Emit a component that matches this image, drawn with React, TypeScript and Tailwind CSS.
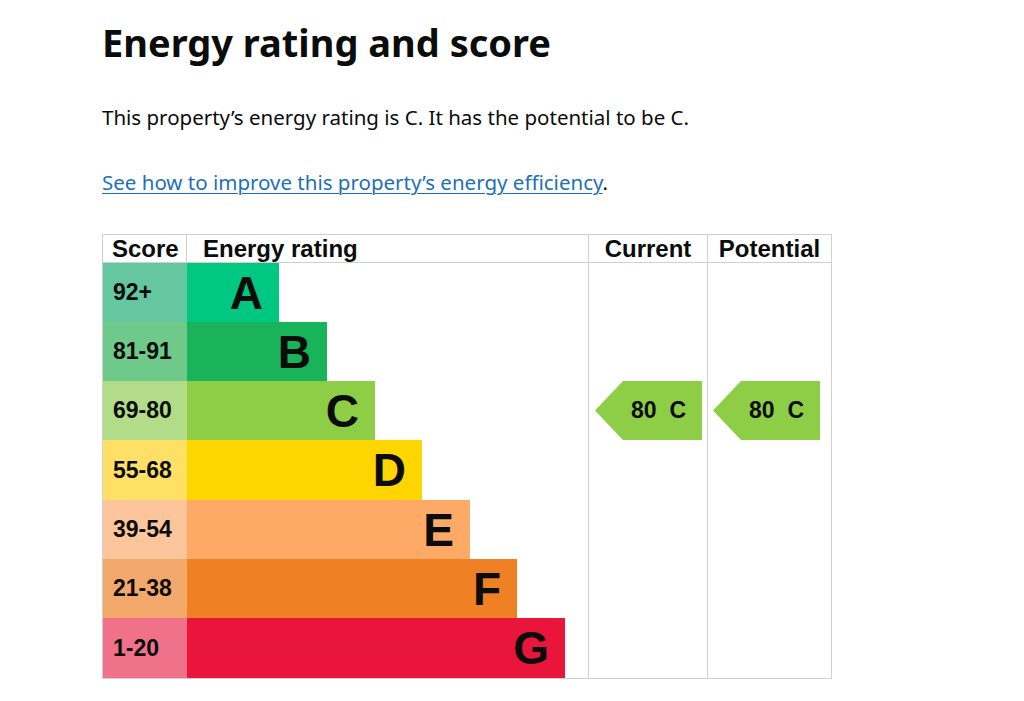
const bands = [
  { score: "92+", letter: "A", width: "w-[92px]", bar: "bg-[#00c781]", tint: "bg-[#64c7a0]", h: "h-[59px]" },
  { score: "81-91", letter: "B", width: "w-[140px]", bar: "bg-[#19b459]", tint: "bg-[#6fc98b]", h: "h-[59px]" },
  { score: "69-80", letter: "C", width: "w-[188px]", bar: "bg-[#8dce46]", tint: "bg-[#b2dc88]", h: "h-[59px]" },
  { score: "55-68", letter: "D", width: "w-[235px]", bar: "bg-[#ffd500]", tint: "bg-[#ffe066]", h: "h-[60px]" },
  { score: "39-54", letter: "E", width: "w-[283px]", bar: "bg-[#fcaa65]", tint: "bg-[#fdc59b]", h: "h-[59px]" },
  { score: "21-38", letter: "F", width: "w-[330px]", bar: "bg-[#ef8023]", tint: "bg-[#f2a76b]", h: "h-[59px]" },
  { score: "1-20", letter: "G", width: "w-[378px]", bar: "bg-[#e9153b]", tint: "bg-[#f0728a]", h: "h-[60px]" },
];

const arial = "font-['Liberation_Sans',Arial,sans-serif]";

function RatingArrow({ score, letter }: { score: string; letter: string }) {
  return (
    <div className="flex h-[59px] w-[107px]">
      <svg width="28" height="59" viewBox="0 0 28 59" className="shrink-0">
        <polygon points="0,29.5 28,0 28,59" fill="#8dce46" />
      </svg>
      <div
        className={`flex flex-1 items-center justify-center gap-[13px] bg-[#8dce46] pr-[8px] text-[23px] font-bold text-[#0b0c0c] ${arial}`}
      >
        <span>{score}</span>
        <span>{letter}</span>
      </div>
    </div>
  );
}

export default function App() {
  return (
    <div className="min-h-[701px] bg-white pl-[102px] pt-[17px] font-['Noto_Sans',sans-serif] text-[#0b0c0c]">
      <h1 className="text-[38px] font-bold leading-[50px]">Energy rating and score</h1>

      <p className="mt-[37px] text-[20.5px] leading-[26px]">
        This property’s energy rating is C. It has the potential to be C.
      </p>

      <p className="mt-[39px] text-[20.5px] leading-[26px]">
        <a href="#" className="text-[#1d70b8] underline decoration-1 underline-offset-[3px]">
          See how to improve this property’s energy efficiency
        </a>
        .
      </p>

      <div
        className={`mt-[39px] grid w-[730px] grid-cols-[84px_402px_119px_123px] border border-[#d0d0d0] ${arial}`}
      >
        <div className="flex h-[28px] items-center border-b border-r border-[#d0d0d0] pl-[9px] text-[24px] font-bold">
          Score
        </div>
        <div className="flex h-[28px] items-center border-b border-r border-[#d0d0d0] pl-[16px] text-[24px] font-bold">
          Energy rating
        </div>
        <div className="flex h-[28px] items-center justify-center border-b border-r border-[#d0d0d0] text-[24px] font-bold">
          Current
        </div>
        <div className="flex h-[28px] items-center justify-center border-b border-[#d0d0d0] text-[24px] font-bold">
          Potential
        </div>

        {bands.map((b) => (
          <div key={b.letter} className="contents">
            <div className={`flex items-center pl-[10px] text-[23px] font-bold ${b.h} ${b.tint}`}>{b.score}</div>
            <div className={`flex items-center border-r border-[#d0d0d0] ${b.h}`}>
              <div
                className={`flex h-full items-center justify-end pr-[16px] text-[46px] font-bold leading-none ${b.width} ${b.bar}`}
              >
                {b.letter}
              </div>
            </div>
            <div className={`flex items-center border-r border-[#d0d0d0] pl-[6px] ${b.h}`}>
              {b.letter === "C" && <RatingArrow score="80" letter="C" />}
            </div>
            <div className={`flex items-center pl-[5px] ${b.h}`}>
              {b.letter === "C" && <RatingArrow score="80" letter="C" />}
            </div>
          </div>
        ))}
      </div>
    </div>
  );
}
